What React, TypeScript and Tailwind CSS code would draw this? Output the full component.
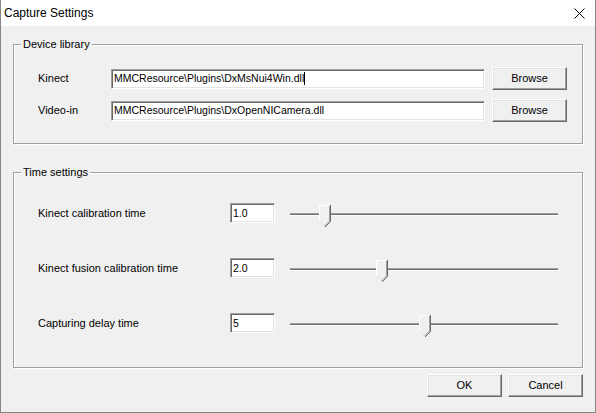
import React from "react";

function TextBox({ value, className, caret }: { value: string; className: string; caret?: boolean }) {
  return (
    <div
      className={
        "h-[20px] flex items-center pl-[2px] bg-white border border-t-[#a0a0a0] border-l-[#a0a0a0] border-b-[#ffffff] border-r-[#ffffff] shadow-[inset_1px_1px_0_#696969,inset_-1px_-1px_0_#e3e3e3] text-[10.5px] leading-[13px] text-black whitespace-nowrap overflow-hidden " +
        className
      }
    >
      <span>{value}</span>
      {caret && <span className="inline-block w-px h-[13px] bg-black" />}
    </div>
  );
}

function Button({ label, className }: { label: string; className: string }) {
  return (
    <div
      className={
        "h-[23px] flex items-center justify-center bg-[#f0f0f0] border border-t-[#ffffff] border-l-[#ffffff] border-b-[#696969] border-r-[#696969] shadow-[inset_-1px_-1px_0_#a0a0a0,inset_1px_1px_0_#e3e3e3] text-[11px] leading-[13px] text-black " +
        className
      }
    >
      {label}
    </div>
  );
}

function Slider({ offset }: { offset: number }) {
  return (
    <div className="relative ml-[15px] w-[268px] h-[20px]">
      <div className="absolute left-0 right-0 top-[10px] h-[3px] border-t border-t-[#a0a0a0] bg-[#6d6d6d] border-b border-b-[#ffffff]" />
      <svg
        className="absolute top-[2px]"
        style={{ left: offset }}
        width="12"
        height="22"
        viewBox="0 0 12 22"
      >
        <path d="M0.5 0.5H10.5V16L5.5 21L0.5 16Z" fill="#f0f0f0" />
        <path d="M0.5 16V0.5H10" stroke="#ffffff" fill="none" />
        <path d="M0.5 16L5 20.5" stroke="#e3e3e3" fill="none" />
        <path d="M11.5 0V16.5L6 22" stroke="#696969" fill="none" />
        <path d="M10.5 1V16L5.5 21" stroke="#a0a0a0" fill="none" />
      </svg>
    </div>
  );
}

export default function App() {
  const times = [
    { label: "Kinect calibration time", value: "1.0", offset: 29 },
    { label: "Kinect fusion calibration time", value: "2.0", offset: 86 },
    { label: "Capturing delay time", value: "5", offset: 129 },
  ];
  return (
    <div className="w-[596px] h-[413px] flex flex-col bg-[#f0f0f0] border-l border-r border-b border-[#858585] font-['Liberation_Sans',Arial,sans-serif] text-black overflow-hidden">
      {/* title bar */}
      <div className="h-[26px] shrink-0 bg-white flex items-center justify-between pl-[3px] pr-[10px] pt-[1px]">
        <span className="text-[12px] leading-[15px]">Capture Settings</span>
        <svg width="11" height="11" viewBox="0 0 11 11">
          <path d="M0.5 0.5L10.5 10.5M10.5 0.5L0.5 10.5" stroke="#000" strokeWidth="1" />
        </svg>
      </div>

      {/* body */}
      <div className="flex flex-col px-[12px] pt-[12px]">
        <fieldset className="border border-[#a0a0a0] shadow-[inset_1px_1px_0_#ffffff,1px_1px_0_#ffffff] pb-[21px]">
          <legend className="ml-[7px] px-[2px] bg-[#f0f0f0] text-[11px] leading-[13px]">Device library</legend>
          <div className="flex flex-col gap-[9px] mt-[16px]">
            <div className="flex items-center pl-[24px]">
              <span className="w-[73px] text-[11px] leading-[13px]">Kinect</span>
              <TextBox value="MMCResource\Plugins\DxMsNui4Win.dll" className="w-[374px]" caret />
              <Button label="Browse" className="ml-[7px] w-[75px]" />
            </div>
            <div className="flex items-center pl-[24px]">
              <span className="w-[73px] text-[11px] leading-[13px]">Video-in</span>
              <TextBox value="MMCResource\Plugins\DxOpenNICamera.dll" className="w-[374px]" />
              <Button label="Browse" className="ml-[7px] w-[75px]" />
            </div>
          </div>
        </fieldset>

        <fieldset className="mt-[22px] border border-[#a0a0a0] shadow-[inset_1px_1px_0_#ffffff,1px_1px_0_#ffffff] pb-[34px]">
          <legend className="ml-[7px] px-[2px] bg-[#f0f0f0] text-[11px] leading-[13px]">Time settings</legend>
          <div className="flex flex-col gap-[35px] mt-[24px]">
            {times.map((t) => (
              <div key={t.label} className="flex items-start h-[20px] pl-[24px]">
                <span className="w-[192px] text-[11px] leading-[20px]">{t.label}</span>
                <TextBox value={t.value} className="w-[45px]" />
                <Slider offset={t.offset} />
              </div>
            ))}
          </div>
        </fieldset>

        <div className="flex justify-end gap-[6px] mt-[6px]">
          <Button label="OK" className="w-[75px]" />
          <Button label="Cancel" className="w-[75px]" />
        </div>
      </div>
    </div>
  );
}
